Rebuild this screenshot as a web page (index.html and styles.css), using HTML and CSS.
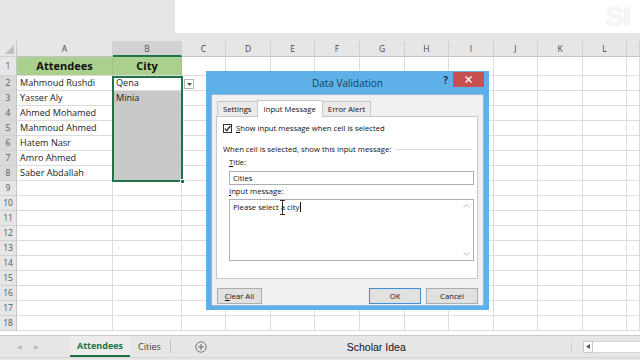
FILE: index.html
```html
<!DOCTYPE html>
<html>
<head>
<meta charset="utf-8">
<link rel="stylesheet" href="styles.css">
</head>
<body>
<div class="app">
  <div class="top"><div class="topbox"><span class="wm">SI</span></div></div>
  <div class="sheet">
    <div class="row hdr"><div class="rh corner"><svg width="9" height="9" viewBox="0 0 9 9"><path d="M9 0V9H0Z" fill="#bdbdbd"/></svg></div><div>A</div><div class="selc">B</div><div>C</div><div>D</div><div>E</div><div>F</div><div>G</div><div>H</div><div>I</div><div>J</div><div>K</div><div>L</div><div></div></div>
    <div class="row r1"><div class="rh">1</div><div class="g">Attendees</div><div class="g">City</div><div></div><div></div><div></div><div></div><div></div><div></div><div></div><div></div><div></div><div></div><div></div></div>
    <div class="row"><div class="rh s">2</div><div>Mahmoud Rushdi</div><div>Qena</div><div></div><div></div><div></div><div></div><div></div><div></div><div></div><div></div><div></div><div></div><div></div></div>
    <div class="row"><div class="rh s">3</div><div>Yasser Aly</div><div class="sb">Minia</div><div></div><div></div><div></div><div></div><div></div><div></div><div></div><div></div><div></div><div></div><div></div></div>
    <div class="row"><div class="rh s">4</div><div>Ahmed Mohamed</div><div class="sb"></div><div></div><div></div><div></div><div></div><div></div><div></div><div></div><div></div><div></div><div></div><div></div></div>
    <div class="row"><div class="rh s">5</div><div>Mahmoud Ahmed</div><div class="sb"></div><div></div><div></div><div></div><div></div><div></div><div></div><div></div><div></div><div></div><div></div><div></div></div>
    <div class="row"><div class="rh s">6</div><div>Hatem Nasr</div><div class="sb"></div><div></div><div></div><div></div><div></div><div></div><div></div><div></div><div></div><div></div><div></div><div></div></div>
    <div class="row"><div class="rh s">7</div><div>Amro Ahmed</div><div class="sb"></div><div></div><div></div><div></div><div></div><div></div><div></div><div></div><div></div><div></div><div></div><div></div></div>
    <div class="row"><div class="rh s">8</div><div>Saber Abdallah</div><div class="sb"></div><div></div><div></div><div></div><div></div><div></div><div></div><div></div><div></div><div></div><div></div><div></div></div>
    <div class="row"><div class="rh">9</div><div></div><div></div><div></div><div></div><div></div><div></div><div></div><div></div><div></div><div></div><div></div><div></div><div></div></div>
    <div class="row"><div class="rh">10</div><div></div><div></div><div></div><div></div><div></div><div></div><div></div><div></div><div></div><div></div><div></div><div></div><div></div></div>
    <div class="row"><div class="rh">11</div><div></div><div></div><div></div><div></div><div></div><div></div><div></div><div></div><div></div><div></div><div></div><div></div><div></div></div>
    <div class="row"><div class="rh">12</div><div></div><div></div><div></div><div></div><div></div><div></div><div></div><div></div><div></div><div></div><div></div><div></div><div></div></div>
    <div class="row"><div class="rh">13</div><div></div><div></div><div></div><div></div><div></div><div></div><div></div><div></div><div></div><div></div><div></div><div></div><div></div></div>
    <div class="row"><div class="rh">14</div><div></div><div></div><div></div><div></div><div></div><div></div><div></div><div></div><div></div><div></div><div></div><div></div><div></div></div>
    <div class="row"><div class="rh">15</div><div></div><div></div><div></div><div></div><div></div><div></div><div></div><div></div><div></div><div></div><div></div><div></div><div></div></div>
    <div class="row"><div class="rh">16</div><div></div><div></div><div></div><div></div><div></div><div></div><div></div><div></div><div></div><div></div><div></div><div></div><div></div></div>
    <div class="row"><div class="rh">17</div><div></div><div></div><div></div><div></div><div></div><div></div><div></div><div></div><div></div><div></div><div></div><div></div><div></div></div>
    <div class="row"><div class="rh">18</div><div></div><div></div><div></div><div></div><div></div><div></div><div></div><div></div><div></div><div></div><div></div><div></div><div></div></div>
    <div class="sel"><span class="handle"></span></div>
    <div class="dd"><svg width="5" height="3" viewBox="0 0 5 3"><path d="M0 0H5L2.5 3Z" fill="#555"/></svg></div>
  </div>
  <div class="tabbar">
    <div class="navs"><span>&#9664;</span><span>&#9654;</span></div>
    <div class="stab active">Attendees</div>
    <div class="stab">Cities</div>
    <div class="tsep"></div>
    <div class="plus"><svg width="12" height="12" viewBox="0 0 12 12"><circle cx="6" cy="6" r="5.2" fill="none" stroke="#777" stroke-width="1"/><path d="M6 3V9M3 6H9" stroke="#777" stroke-width="1.2"/></svg></div>
    <div class="brand">Scholar Idea</div>
    <div class="dots"></div>
    <div class="hscroll"><span class="harrow"><svg width="4" height="5" viewBox="0 0 4 5"><path d="M4 0V5L0 2.5Z" fill="#555"/></svg></span><span class="htrack"></span></div>
  </div>
  <div class="status"></div>

  <div class="dlg">
    <div class="dlg-title">
      <span class="tspace"></span>
      <span class="dlg-name">Data Validation</span>
      <span class="tctl"><span class="help">?</span><span class="close"><svg width="7" height="7" viewBox="0 0 7 7"><path d="M0.5 0.5L6.5 6.5M6.5 0.5L0.5 6.5" stroke="#fff" stroke-width="1.4"/></svg></span></span>
    </div>
    <div class="dlg-body">
      <div class="tabs">
        <div class="tab">Settings</div>
        <div class="tab active">Input Message</div>
        <div class="tab">Error Alert</div>
      </div>
      <div class="panel">
        <div class="chk"><span class="box"><svg width="7" height="7" viewBox="0 0 7 7"><path d="M0.8 3.6L2.7 5.6L6.3 1" fill="none" stroke="#222" stroke-width="1.3"/></svg></span><span><u>S</u>how input message when cell is selected</span></div>
        <div class="group"><span>When cell is selected, show this input message:</span><span class="rule"></span></div>
        <div class="lbl"><u>T</u>itle:</div>
        <div class="field">Cities</div>
        <div class="lbl lbl2"><u>I</u>nput message:</div>
        <div class="tarea">
          <div class="ttext">Please select <span class="ia">a<span class="ibeam"></span></span> city<span class="caret"></span></div>
          <div class="vbar">
            <svg width="7" height="4" viewBox="0 0 7 4"><path d="M0.5 3.5L3.5 0.8L6.5 3.5" fill="none" stroke="#bcbcbc" stroke-width="1"/></svg>
            <svg width="7" height="4" viewBox="0 0 7 4"><path d="M0.5 0.5L3.5 3.2L6.5 0.5" fill="none" stroke="#bcbcbc" stroke-width="1"/></svg>
          </div>
        </div>
      </div>
      <div class="btns">
        <div class="btn clear"><u>C</u>lear All</div>
        <div class="bspace"></div>
        <div class="btn ok">OK</div>
        <div class="btn">Cancel</div>
      </div>
    </div>
  </div>
</div>
</body>
</html>
```

FILE: styles.css
```css
* { box-sizing: border-box; margin: 0; padding: 0; }
body { width: 640px; height: 360px; overflow: hidden; background: #e6e6e6; font-family: "Open Sans", "Noto Sans", sans-serif; }
.app { position: relative; width: 640px; height: 360px; display: flex; flex-direction: column; }

.top { height: 41px; flex: none; display: flex; justify-content: flex-end; align-items: flex-start; background: #e6e6e6; }
.topbox { width: 465px; height: 33px; background: #fff; display: flex; justify-content: flex-end; align-items: center; padding-right: 10px; }
.wm { font: bold 28px "Liberation Sans", sans-serif; color: #f7f7f7; text-shadow: 0 0 1px #d8d8d8; letter-spacing: -1px; }

.sheet { position: relative; height: 294px; flex: none; overflow: hidden; background: #fff; }
.row { display: grid; grid-template-columns: 17px 96px 69px 44px 45px 44px 45px 45px 44px 45px 44px 45px 44px 13px; height: 15px; }
.row > div { border-right: 1px solid #dcdcdc; border-bottom: 1px solid #dcdcdc; font-size: 9.1px; color: #222; line-height: 14px; padding-left: 3px; white-space: nowrap; overflow: hidden; }
.row > .rh { background: #e6e6e6; border-right: 1px solid #c6c6c6; border-bottom: 1px solid #d2d2d2; padding: 0; text-align: center; font-size: 8.5px; color: #555; }
.row > .rh.s { background: #d9d9d9; }
.hdr { height: 16px; background: #e6e6e6; }
.hdr > div { border-right: 1px solid #cfcfcf; border-bottom: 1px solid #c4c4c4; text-align: center; padding: 0; font-size: 8.5px; color: #444; line-height: 15px; background: #e6e6e6; }
.hdr > .corner { display: flex; align-items: flex-end; justify-content: flex-end; padding: 0 2px 2px 0; }
.hdr > .selc { background: #d2d2d2; border-bottom: 2px solid #217346; color: #555; }
.r1 { height: 19px; }
.r1 > div { line-height: 18px; }
.r1 > .g { background: #a9d08e; font-weight: 700; font-size: 11px; text-align: center; padding: 0; color: #111; border-right-color: #a0c488; }
.row > .sb { background: #c9c9c9; border-bottom-color: #c9c9c9; }

.sel { position: absolute; left: 112px; top: 35px; width: 71px; height: 106px; border: 2px solid #217346; }
.handle { position: absolute; right: -4px; bottom: -4px; width: 5px; height: 5px; background: #217346; border: 1px solid #fff; }
.dd { position: absolute; left: 184px; top: 38px; width: 10px; height: 10px; background: #fff; border: 1px solid #b5b5b5; display: flex; align-items: center; justify-content: center; }

.tabbar { height: 22px; flex: none; display: flex; align-items: stretch; border-top: 1px solid #c8c8c8; background: #e6e6e6; }
.navs { width: 70px; display: flex; gap: 12px; padding-left: 17px; align-items: center; font-size: 6px; color: #b5b5b5; }
.stab { font-size: 9px; color: #444; display: flex; align-items: center; padding: 0 8px; }
.stab.active { width: 60px; justify-content: center; color: #217346; font-weight: 700; background: #ececec; border-bottom: 2px solid #217346; }
.tsep { width: 1px; background: #bdbdbd; margin: 4px 0 4px 1px; }
.plus { width: 60px; display: flex; align-items: center; justify-content: center; }
.brand { margin-left: 116px; font: 10.5px "Liberation Sans", sans-serif; color: #111; display: flex; align-items: center; }
.dots { width: 1px; margin: 6px 0 6px 165px; border-left: 1px dotted #b0b0b0; }
.hscroll { margin-left: 11px; display: flex; align-items: center; flex: 1; }
.harrow { width: 10px; height: 12px; background: #fff; border: 1px solid #c8c8c8; display: flex; align-items: center; justify-content: center; }
.htrack { flex: 1; height: 12px; background: #fff; border-top: 1px solid #d6d6d6; border-bottom: 1px solid #d6d6d6; }
.status { flex: 1; background: #e6e6e6; border-top: 1px solid #d4d4d4; }

.dlg { position: absolute; left: 206px; top: 71px; width: 283px; height: 239px; background: #5eb0e8; display: flex; flex-direction: column; padding: 0 5px 4px 5px; font-size: 7.7px; line-height: 10px; color: #111; }
.dlg-title { height: 23px; flex: none; display: flex; align-items: flex-start; }
.tspace { width: 46px; flex: none; }
.dlg-name { flex: 1; text-align: center; font-size: 10px; color: #25394e; line-height: 24px; }
.tctl { width: 46px; flex: none; display: flex; align-items: flex-start; justify-content: flex-end; }
.help { font-weight: 700; font-size: 10px; color: #1e3550; margin-right: 5px; line-height: 19px; }
.close { width: 31px; height: 15px; margin-top: 1px; background: #c75050; display: flex; align-items: center; justify-content: center; }
.dlg-body { flex: 1; background: #f0f0f0; padding: 5px 5px 0 4px; display: flex; flex-direction: column; border: 1px solid #8fb8d8; }
.tabs { display: flex; align-items: flex-end; height: 16px; padding-left: 1px; }
.tab { height: 15px; padding: 0 5px; border: 1px solid #c9c9c9; border-bottom: none; background: #eaeaea; line-height: 14px; margin-right: -1px; }
.tab.active { height: 17px; background: #fff; position: relative; z-index: 1; margin-bottom: -1px; padding: 1px 6px 0; }
.panel { height: 163px; background: #fff; border: 1px solid #c9c9c9; padding: 6px 5px 0 6px; display: flex; flex-direction: column; }
.chk { display: flex; align-items: center; gap: 4px; height: 10px; }
.box { width: 9px; height: 9px; border: 1px solid #333; display: flex; align-items: center; justify-content: center; background: #fff; flex: none; }
.group { display: flex; align-items: center; gap: 4px; margin-top: 11px; height: 10px; }
.rule { flex: 1; height: 1px; background: #dcdcdc; }
.lbl { margin: 3px 0 0 6px; height: 10px; }
.field { margin: 4px 0 0 6px; width: 245px; height: 14px; border: 1px solid #abadb3; padding-left: 3px; line-height: 12px; background: #fff; }
.lbl2 { margin-top: 1px; }
.tarea { margin: 3px 0 0 6px; width: 245px; height: 62px; border: 1px solid #abadb3; display: flex; background: #fff; }
.ttext { flex: 1; padding: 2px 0 0 3px; line-height: 11px; }
.ia { position: relative; }
.caret { display: inline-block; width: 1px; height: 10px; background: #111; vertical-align: -2px; margin-left: 1px; }
.ibeam { position: absolute; left: -1px; top: -2px; width: 5px; height: 15px; border-top: 1px solid #333; border-bottom: 1px solid #333; }
.ibeam::after { content: ""; position: absolute; left: 2px; top: 0; width: 1px; height: 13px; background: #333; }
.vbar { width: 13px; display: flex; flex-direction: column; justify-content: space-between; align-items: center; padding: 4px 0; }
.btns { display: flex; margin-top: 9px; gap: 5px; padding-left: 1px; }
.btn { height: 16px; width: 52px; border: 1px solid #adadad; background: #e1e1e1; text-align: center; line-height: 14px; }
.btn.clear { width: 45px; }
.btn.ok { border-color: #3c8fd8; }
.bspace { flex: 1; }
```
